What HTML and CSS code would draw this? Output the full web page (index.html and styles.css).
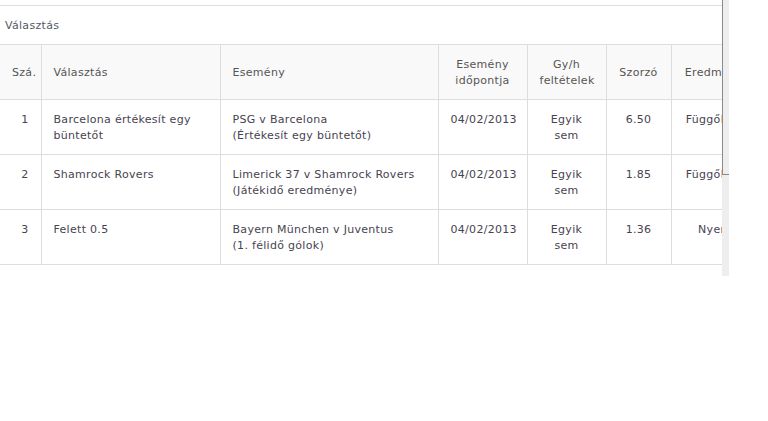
FILE: index.html
```html
<!DOCTYPE html>
<html lang="hu">
<head>
<meta charset="utf-8">
<title>Választás</title>
<link rel="stylesheet" href="styles.css">
</head>
<body>
<div class="frame">
  <div class="content">
    <div class="section">
      <div class="title">Választás</div>
      <table class="bets">
        <colgroup>
          <col class="c-num"><col class="c-sel"><col class="c-evt"><col class="c-date"><col class="c-cond"><col class="c-odds"><col class="c-res">
        </colgroup>
        <thead>
          <tr>
            <th class="num">Szá.</th>
            <th class="left">Választás</th>
            <th class="left">Esemény</th>
            <th>Esemény<br>időpontja</th>
            <th>Gy/h<br>feltételek</th>
            <th>Szorzó</th>
            <th>Eredmény</th>
          </tr>
        </thead>
        <tbody>
          <tr>
            <td class="num">1</td>
            <td class="left">Barcelona értékesít egy büntetőt</td>
            <td class="left">PSG v Barcelona<br>(Értékesít egy büntetőt)</td>
            <td>04/02/2013</td>
            <td>Egyik<br>sem</td>
            <td>6.50</td>
            <td>Függőben</td>
          </tr>
          <tr>
            <td class="num">2</td>
            <td class="left">Shamrock Rovers</td>
            <td class="left">Limerick 37 v Shamrock Rovers<br>(Játékidő eredménye)</td>
            <td>04/02/2013</td>
            <td>Egyik<br>sem</td>
            <td>1.85</td>
            <td>Függőben</td>
          </tr>
          <tr>
            <td class="num">3</td>
            <td class="left">Felett 0.5</td>
            <td class="left">Bayern München v Juventus<br>(1. félidő gólok)</td>
            <td>04/02/2013</td>
            <td>Egyik<br>sem</td>
            <td>1.36</td>
            <td>Nyert</td>
          </tr>
        </tbody>
      </table>
    </div>
  </div>
  <div class="scrollbar">
    <div class="thumb"></div>
  </div>
</div>
</body>
</html>
```

FILE: styles.css
```css
html, body {
  margin: 0;
  padding: 0;
  background: #ffffff;
}

body {
  font-family: "DejaVu Sans", Verdana, sans-serif;
  font-size: 11px;
  line-height: 16px;
  letter-spacing: 0.3px;
  color: #4a4a4a;
}

.frame {
  display: flex;
  height: 276px;
}

.content {
  width: 722px;
  overflow: hidden;
  flex: none;
}

.section {
  margin-top: 5px;
  border-top: 1px solid #dddddd;
}

.title {
  padding: 12px 5px 10px;
  color: #555a66;
}

.bets {
  border-collapse: collapse;
  table-layout: fixed;
  width: 757px;
}

.c-num { width: 41px; }
.c-sel { width: 179px; }
.c-evt { width: 218px; }
.c-date { width: 89px; }
.c-cond { width: 79px; }
.c-odds { width: 65px; }
.c-res { width: 86px; }

.bets th,
.bets td {
  border: 1px solid #dddddd;
  padding: 12px 12px 10px;
  text-align: center;
  overflow: hidden;
}

.bets th {
  background: #f9f9f9;
  font-weight: normal;
  color: #555555;
  vertical-align: middle;
  height: 32px;
}

.bets td {
  vertical-align: top;
  height: 32px;
  color: #474350;
}

.bets th:first-child,
.bets td:first-child {
  border-left: none;
}

.bets .num {
  text-align: right;
}

.bets .left {
  text-align: left;
}

.bets td:last-child,
.bets th:last-child {
  white-space: nowrap;
}

.scrollbar {
  width: 7px;
  flex: none;
  background: #eeeeee;
  display: flex;
  flex-direction: column;
}

.thumb {
  height: 174px;
  border-left: 1px solid #8a8a8a;
  border-bottom: 1px solid #8a8a8a;
}
```
